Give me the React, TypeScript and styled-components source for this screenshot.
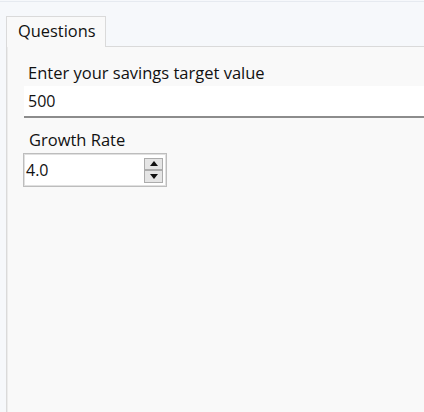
import React from "react";
import styled, { createGlobalStyle } from "styled-components";

const Global = createGlobalStyle`
  html, body { margin: 0; padding: 0; }
  body {
    background: #f6f8fb;
    font-family: "Open Sans", "Noto Sans", sans-serif;
    color: #111111;
    width: 424px;
    height: 412px;
    overflow: hidden;
  }
`;

const Page = styled.div`
  height: 412px;
  box-sizing: border-box;
  border-top: 1px solid #e6eaf0;
  margin-top: 1px;
  padding: 14px 0 0 6px;
  display: flex;
  flex-direction: column;
`;

const TabStrip = styled.div`
  display: flex;
  height: 30px;
  position: relative;
  z-index: 1;
`;

const Tab = styled.div`
  width: 100px;
  box-sizing: border-box;
  border: 1px solid #dadada;
  border-bottom: none;
  background: #f9f9f9;
  height: 31px;
  font-size: 16.4px;
  line-height: 20px;
  padding: 4px 0 0 11px;
`;

const Panel = styled.div`
  flex: 1;
  background: #f9f9f9;
  border-top: 1px solid #dadada;
  border-left: 1px solid #dadada;
  box-shadow: inset 1px 0 0 #ececec;
  padding: 16px 0 0 17px;
  display: flex;
  flex-direction: column;
`;

const Label = styled.div<{ $indent: number }>`
  font-size: 16.5px;
  line-height: 20px;
  padding-left: ${(p) => p.$indent}px;
  margin-bottom: 3px;
`;

const TextBox = styled.div`
  height: 32px;
  box-sizing: border-box;
  background: #ffffff;
  border-bottom: 2px solid #8c8c8c;
  font-size: 16px;
  line-height: 22px;
  padding: 4px 0 0 4px;
  margin-bottom: 12px;
`;

const Spinner = styled.div`
  width: 144px;
  height: 34px;
  box-sizing: border-box;
  border: 1px solid #bdbdbd;
  box-shadow: inset 0 0 0 1px #e0e0e0;
  background: #ffffff;
  margin-left: -1px;
  display: flex;
  align-items: center;
  padding: 0 3px 0 2px;
`;

const SpinValue = styled.div`
  flex: 1;
  font-size: 16px;
  line-height: 22px;
`;

const SpinButtons = styled.div`
  display: flex;
  flex-direction: column;
  width: 19px;
`;

const SpinButton = styled.div<{ $h: number }>`
  height: ${(p) => p.$h}px;
  box-sizing: border-box;
  border: 1px solid #acacac;
  background: #e5e5e5;
  display: flex;
  align-items: center;
  justify-content: center;
`;

const Arrow = ({ up }: { up?: boolean }) => (
  <svg width="8" height="5" viewBox="0 0 8 5">
    <path d={up ? "M0 5 L4 0 L8 5 Z" : "M0 0 L4 5 L8 0 Z"} fill="#111" />
  </svg>
);

export default function App() {
  return (
    <>
      <Global />
      <Page>
        <TabStrip>
          <Tab>Questions</Tab>
        </TabStrip>
        <Panel>
          <Label $indent={4}>Enter your savings target value</Label>
          <TextBox>500</TextBox>
          <Label $indent={5}>Growth Rate</Label>
          <Spinner>
            <SpinValue>4.0</SpinValue>
            <SpinButtons>
              <SpinButton $h={12}><Arrow up /></SpinButton>
              <SpinButton $h={13}><Arrow /></SpinButton>
            </SpinButtons>
          </Spinner>
        </Panel>
      </Page>
    </>
  );
}
